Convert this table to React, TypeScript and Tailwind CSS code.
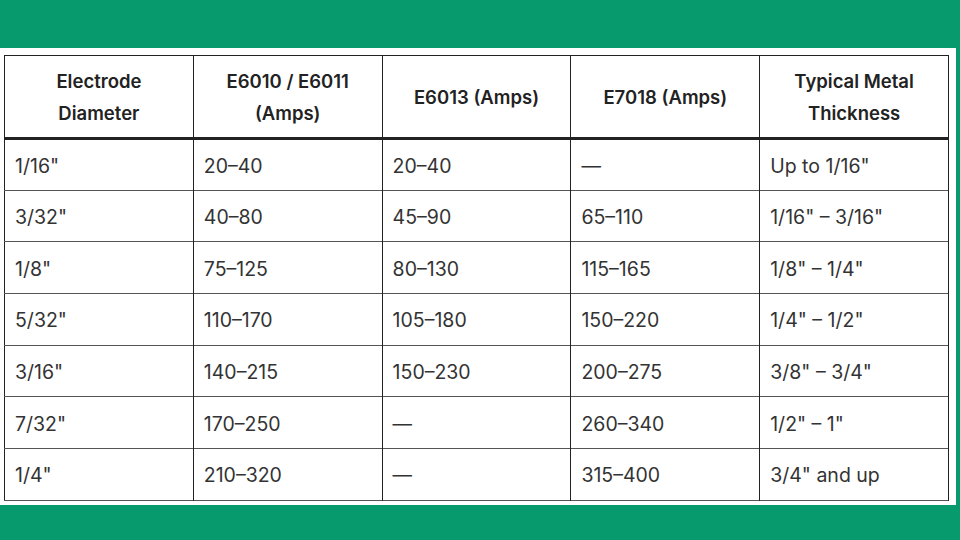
import React from "react";

const headers = [
  ["Electrode", "Diameter"],
  ["E6010 / E6011", "(Amps)"],
  ["E6013 (Amps)"],
  ["E7018 (Amps)"],
  ["Typical Metal", "Thickness"],
];

const rows = [
  ["1/16\"", "20–40", "20–40", "—", "Up to 1/16\""],
  ["3/32\"", "40–80", "45–90", "65–110", "1/16\" – 3/16\""],
  ["1/8\"", "75–125", "80–130", "115–165", "1/8\" – 1/4\""],
  ["5/32\"", "110–170", "105–180", "150–220", "1/4\" – 1/2\""],
  ["3/16\"", "140–215", "150–230", "200–275", "3/8\" – 3/4\""],
  ["7/32\"", "170–250", "—", "260–340", "1/2\" – 1\""],
  ["1/4\"", "210–320", "—", "315–400", "3/4\" and up"],
];

export default function App() {
  return (
    <div
      className="w-[960px] h-[540px] bg-[#079a6c] flex flex-col overflow-hidden"
      style={{ fontFamily: "Inter, 'Noto Sans', sans-serif" }}
    >
      <div className="h-[48px] shrink-0" />
      <div className="w-[956px] h-[457px] bg-white pl-[4px] pt-[7px]">
        <table className="w-[945px] table-fixed border-collapse border border-[#222]">
          <thead>
            <tr className="h-[83px] border-b-[3px] border-[#222]">
              {headers.map((h, i) => (
                <th
                  key={i}
                  className="border-r border-[#222] text-center align-middle text-[18.5px] font-semibold leading-[32px] text-[#222]"
                >
                  {h.map((line, j) => (
                    <div key={j}>{line}</div>
                  ))}
                </th>
              ))}
            </tr>
          </thead>
          <tbody>
            {rows.map((r, i) => (
              <tr key={i} className="h-[51.7px] border-b border-[#555]">
                {r.map((c, j) => (
                  <td
                    key={j}
                    className="border-r border-[#222] pl-[10px] pt-[3px] text-[19.5px] text-[#333] align-middle"
                  >
                    {c}
                  </td>
                ))}
              </tr>
            ))}
          </tbody>
        </table>
      </div>
    </div>
  );
}
